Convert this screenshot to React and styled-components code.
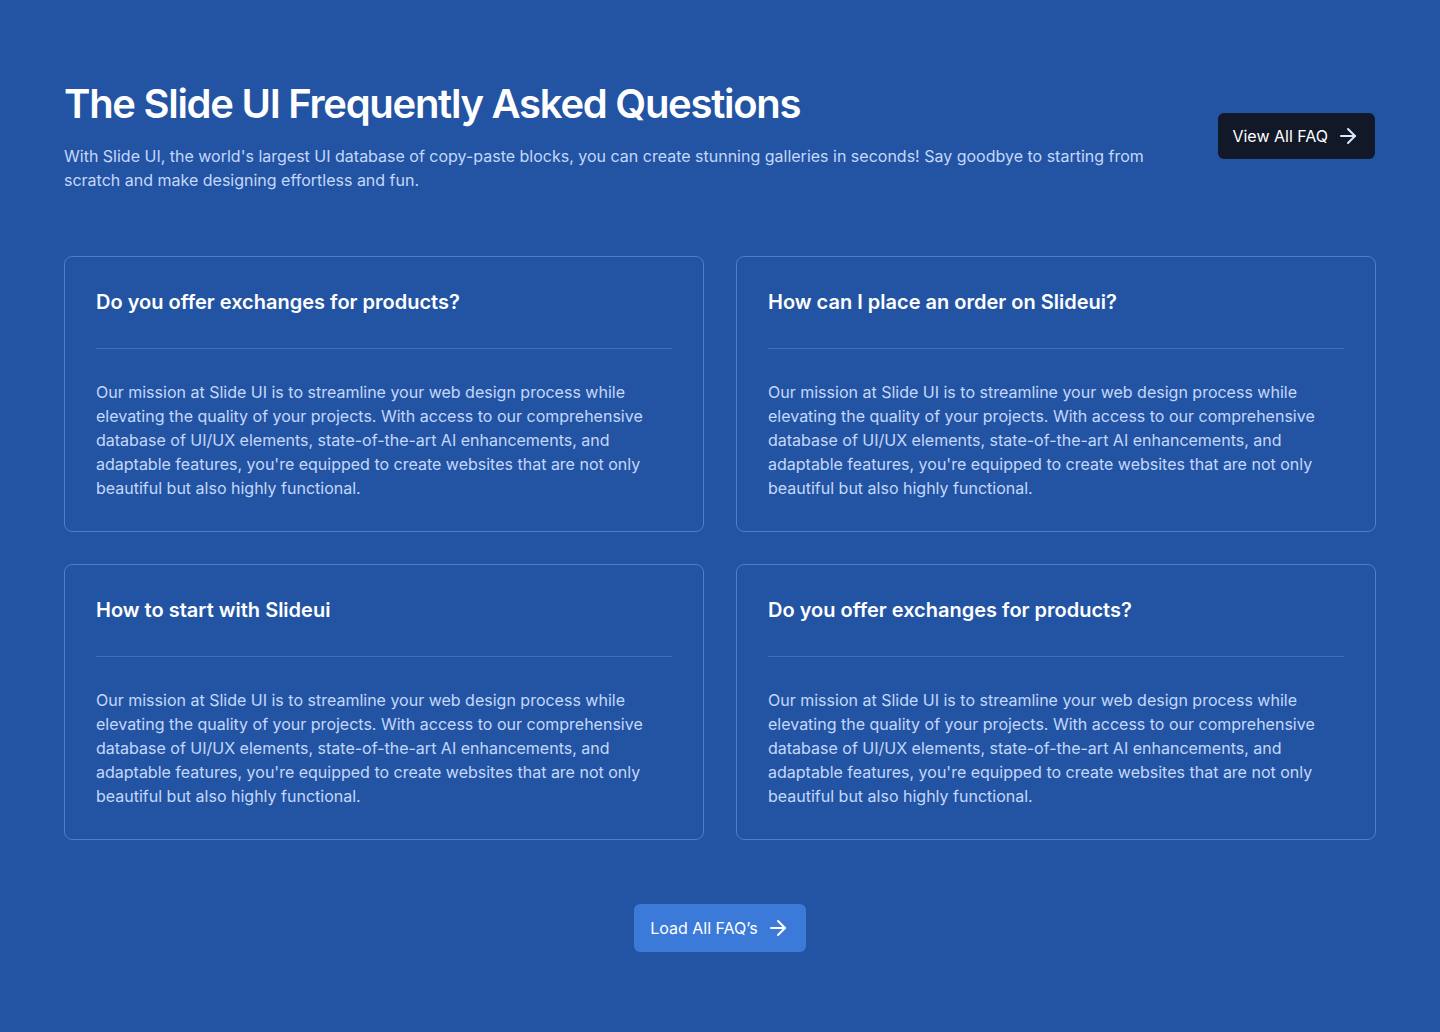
import React from "react";
import styled, { createGlobalStyle } from "styled-components";
import { ArrowRight } from "lucide-react";

const GlobalStyle = createGlobalStyle`
  * { box-sizing: border-box; }
  body {
    margin: 0;
    background: #2354a3;
    font-family: Inter, "Noto Sans", sans-serif;
    -webkit-font-smoothing: antialiased;
  }
`;

const Page = styled.section`
  min-height: 1032px;
  background: #2354a3;
  padding: 80px 64px 80px;
`;

const Header = styled.div`
  display: flex;
  align-items: center;
  justify-content: space-between;
  gap: 48px;
`;

const HeaderText = styled.div`
  max-width: 1090px;
`;

const Title = styled.h1`
  margin: 0 0 16px;
  font-size: 40px;
  line-height: 48px;
  font-weight: 600;
  letter-spacing: -0.032em;
  color: #ffffff;
`;

const Lead = styled.p`
  margin: 0;
  font-size: 16px;
  line-height: 24px;
  color: #c3d8fb;
`;

const Button = styled.button`
  display: inline-flex;
  align-items: center;
  gap: 8px;
  flex-shrink: 0;
  height: ${(p) => (p.$primary ? "48px" : "46px")};
  padding: ${(p) => (p.$primary ? "0 16px" : "0 15px 0 14px")};
  margin-right: ${(p) => (p.$primary ? "0" : "1px")};
  border: none;
  border-radius: 6px;
  background: ${(p) => (p.$primary ? "#3b7ad9" : "#111827")};
  color: #ffffff;
  font-family: inherit;
  font-size: 16px;
  font-weight: 400;
  cursor: pointer;

  svg {
    color: ${(p) => (p.$primary ? "#ffffff" : "#dbe7fd")};
  }
`;

const Grid = styled.div`
  display: grid;
  grid-template-columns: 1fr 1fr;
  gap: 32px;
  margin-top: 64px;
`;

const Card = styled.article`
  border: 1px solid #4c7ecd;
  border-radius: 8px;
  padding: 31px;
`;

const Question = styled.h3`
  margin: 0;
  font-size: 20px;
  line-height: 28px;
  font-weight: 600;
  color: #ffffff;
`;

const Divider = styled.hr`
  margin: 32px 0 31px;
  border: none;
  border-top: 1px solid #3e6ebd;
`;

const Answer = styled.p`
  margin: 0;
  font-size: 16px;
  line-height: 24px;
  color: #c3d8fb;
`;

const Footer = styled.div`
  display: flex;
  justify-content: center;
  margin-top: 64px;
`;

const answer =
  "Our mission at Slide UI is to streamline your web design process while elevating the quality of your projects. With access to our comprehensive database of UI/UX elements, state-of-the-art AI enhancements, and adaptable features, you're equipped to create websites that are not only beautiful but also highly functional.";

const faqs = [
  "Do you offer exchanges for products?",
  "How can I place an order on Slideui?",
  "How to start with Slideui",
  "Do you offer exchanges for products?",
];

export default function App() {
  return (
    <>
      <GlobalStyle />
      <Page>
        <Header>
          <HeaderText>
            <Title>The Slide UI Frequently Asked Questions</Title>
            <Lead>
              With Slide UI, the world's largest UI database of copy-paste
              blocks, you can create stunning galleries in seconds! Say goodbye
              to starting from scratch and make designing effortless and fun.
            </Lead>
          </HeaderText>
          <Button>
            View All FAQ
            <ArrowRight size={24} strokeWidth={2} />
          </Button>
        </Header>
        <Grid>
          {faqs.map((q, i) => (
            <Card key={i}>
              <Question>{q}</Question>
              <Divider />
              <Answer>{answer}</Answer>
            </Card>
          ))}
        </Grid>
        <Footer>
          <Button $primary>
            Load All FAQ’s
            <ArrowRight size={24} strokeWidth={2} />
          </Button>
        </Footer>
      </Page>
    </>
  );
}
